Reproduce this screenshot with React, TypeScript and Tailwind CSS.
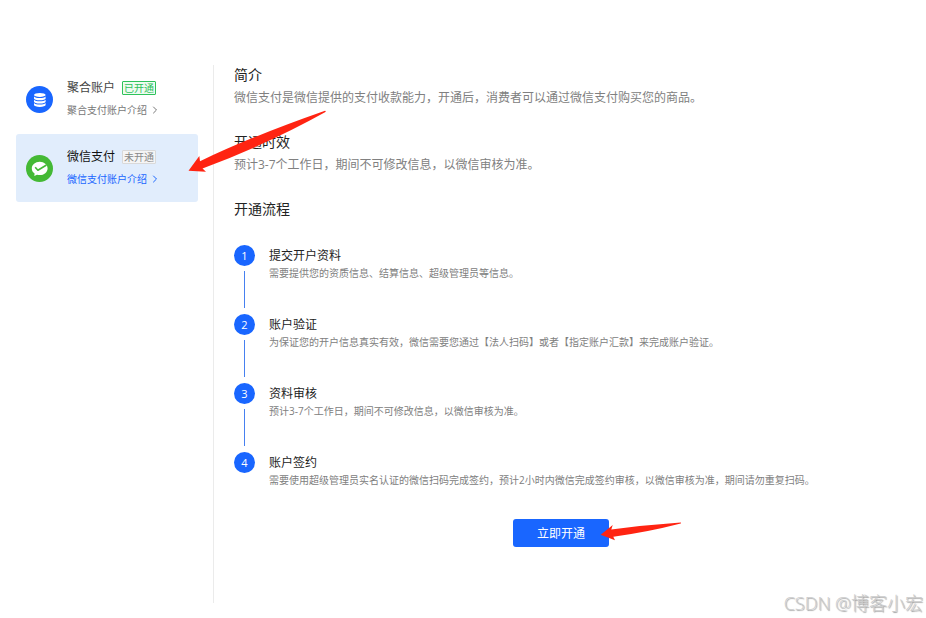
import React from 'react';
import { ChevronRight } from 'lucide-react';
import { clsx } from 'clsx';

interface Account {
  id: string;
  name: string;
  status: string;
  opened: boolean;
  active: boolean;
  link: string;
  icon: React.ReactNode;
}

interface Step {
  title: string;
  desc: string;
}

const StackIcon = () => (
  <svg viewBox="0 0 27 27" className="w-[27px] h-[27px] shrink-0" aria-hidden="true">
    <circle cx="13.5" cy="13.5" r="13.5" fill="#1966ff" />
    <ellipse cx="13.8" cy="8.900" rx="5.800" ry="2" fill="#fff" />
    <path d="M8 10.400c1 1.200 3.200 1.600 5.800 1.600s4.800-.4 5.800-1.600v2.100c0 1-2.600 1.800-5.800 1.800s-5.800-.8-5.800-1.800z" fill="#fff" />
    <path d="M8 13.700c1 1.200 3.200 1.600 5.800 1.600s4.800-.4 5.800-1.600v2.100c0 1-2.600 1.800-5.800 1.800s-5.800-.8-5.800-1.800z" fill="#fff" />
    <path d="M8 17c1 1.200 3.200 1.600 5.800 1.600s4.800-.4 5.800-1.600v2.100c0 1-2.600 1.800-5.800 1.800s-5.800-.8-5.800-1.800z" fill="#fff" />
  </svg>
);

const WechatPayIcon = () => (
  <svg viewBox="0 0 27 27" className="w-[27px] h-[27px] shrink-0" aria-hidden="true">
    <circle cx="13.5" cy="13.5" r="13.5" fill="#44b935" />
    <path d="M13.700 6.700c-4.400 0-7.900 3-7.900 6.700 0 2.100 1.100 3.900 2.800 5.100l-.3 2.500 2.700-1.300c.9.300 1.800.4 2.700.4 4.400 0 7.900-3 7.900-6.700s-3.500-6.700-7.900-6.700z" fill="#fff" />
    <path d="M9.200 12.200l2.700 3 8.600-5.200" fill="none" stroke="#44b935" strokeWidth="1.600" strokeLinejoin="round" />
  </svg>
);

const accounts: Account[] = [
  { id: 'union', name: '聚合账户', status: '已开通', opened: true, active: false, link: '聚合支付账户介绍', icon: <StackIcon /> },
  { id: 'wechat', name: '微信支付', status: '未开通', opened: false, active: true, link: '微信支付账户介绍', icon: <WechatPayIcon /> },
];

const sections = [
  { title: '简介', text: '微信支付是微信提供的支付收款能力，开通后，消费者可以通过微信支付购买您的商品。' },
  { title: '开通时效', text: '预计3-7个工作日，期间不可修改信息，以微信审核为准。' },
];

const steps: Step[] = [
  { title: '提交开户资料', desc: '需要提供您的资质信息、结算信息、超级管理员等信息。' },
  { title: '账户验证', desc: '为保证您的开户信息真实有效，微信需要您通过【法人扫码】或者【指定账户汇款】来完成账户验证。' },
  { title: '资料审核', desc: '预计3-7个工作日，期间不可修改信息，以微信审核为准。' },
  { title: '账户签约', desc: '需要使用超级管理员实名认证的微信扫码完成签约，预计2小时内微信完成签约审核，以微信审核为准，期间请勿重复扫码。' },
];

const AccountCard: React.FC<{ account: Account }> = ({ account }) => (
  <li className={clsx('flex items-center gap-3.5 rounded-[3px] px-2.5 py-[13px]', account.active && 'bg-[#e1edfc]')}>
    {account.icon}
    <div className="flex flex-col gap-0.5">
      <div className="flex items-center gap-[7px]">
        <span className={clsx('text-xs leading-5', account.active ? 'text-[#111111]' : 'text-[#444444]')}>{account.name}</span>
        <span
          className={clsx(
            'rounded-[1px] border px-px text-[10px] leading-3',
            account.opened ? 'border-[#2fc25b] bg-[#eefbf1] text-[#2fc25b]' : 'border-[#d9d9d9] bg-[#f5f5f5] text-[#888888]'
          )}
        >
          {account.status}
        </span>
      </div>
      <a
        href="#intro"
        className={clsx('flex items-center gap-0.5 text-[10px] leading-5', account.active ? 'text-[#1966ff]' : 'text-[#777777]')}
      >
        {account.link}
        <ChevronRight className="w-3 h-3" strokeWidth={2} />
      </a>
    </div>
  </li>
);

const StepItem: React.FC<{ step: Step; index: number; isLast: boolean }> = ({ step, index, isLast }) => (
  <li className="flex gap-3.5">
    <div className="flex flex-col items-center">
      <span className="flex w-[21px] h-[21px] items-center justify-center rounded-full bg-[#1966ff] pt-px text-[11px] text-white">
        {index + 1}
      </span>
      {!isLast && <span className="mt-[5px] mb-1.5 h-[37px] w-px bg-[#4680f0]" />}
    </div>
    <div>
      <h3 className="text-xs leading-[22px] text-[#222222]">{step.title}</h3>
      <p className="text-[10px] leading-3 text-[#808080]">{step.desc}</p>
    </div>
  </li>
);

export default function App() {
  return (
    <div className="relative min-h-screen overflow-hidden bg-white pt-[65px] pb-[15px] font-['Open_Sans','Noto_Sans_CJK_SC',sans-serif]">
      <div className="flex pl-4">
        <aside className="w-[182px] shrink-0">
          <ul className="flex flex-col gap-px">
            {accounts.map(account => (
              <AccountCard key={account.id} account={account} />
            ))}
          </ul>
        </aside>

        <main id="intro" className="ml-[15px] min-h-[538px] flex-1 border-l border-[#ebebeb] pl-5 pr-[38px]">
          {sections.map(section => (
            <section key={section.title} className="mb-6 flex flex-col gap-[3px]">
              <h2 className="text-sm leading-5 text-[#222222]">{section.title}</h2>
              <p className="text-xs leading-5 text-[#808080]">{section.text}</p>
            </section>
          ))}

          <section>
            <h2 className="text-sm leading-5 text-[#222222]">开通流程</h2>
            <ol className="mt-[26px]">
              {steps.map((step, idx) => (
                <StepItem key={step.title} step={step} index={idx} isLast={idx === steps.length - 1} />
              ))}
            </ol>
          </section>

          <div className="mt-[33px] flex justify-center">
            <button type="button" className="h-7 w-24 rounded-[3px] bg-[#1966ff] pt-0.5 text-xs text-white">
              立即开通
            </button>
          </div>
        </main>
      </div>

      {/* Pointer arrows */}
      <svg className="pointer-events-none absolute top-0 left-0" width="700" height="560" viewBox="0 0 700 560" aria-hidden="true">
        <path d="M188.500 170.700L199.300 156l.7 5.200Q250 137 325 110.700q1.500.3 0 1.600Q270 143 202.500 168.600l3.500 3.100z" fill="#ff2412" />
        <path d="M600.700 534.700l12-9.700-1.400 4.500Q645 525 680.700 522.500q1 .6 0 1Q648 532 613.300 536.700l1.700 3.600z" fill="#ff2412" />
      </svg>

      <div className="absolute right-[3px] bottom-[3px] text-lg leading-6 font-light text-[#cccccc] [text-shadow:1px_1px_1px_#a0a0a0]">
        CSDN @博客小宏
      </div>
    </div>
  );
}
